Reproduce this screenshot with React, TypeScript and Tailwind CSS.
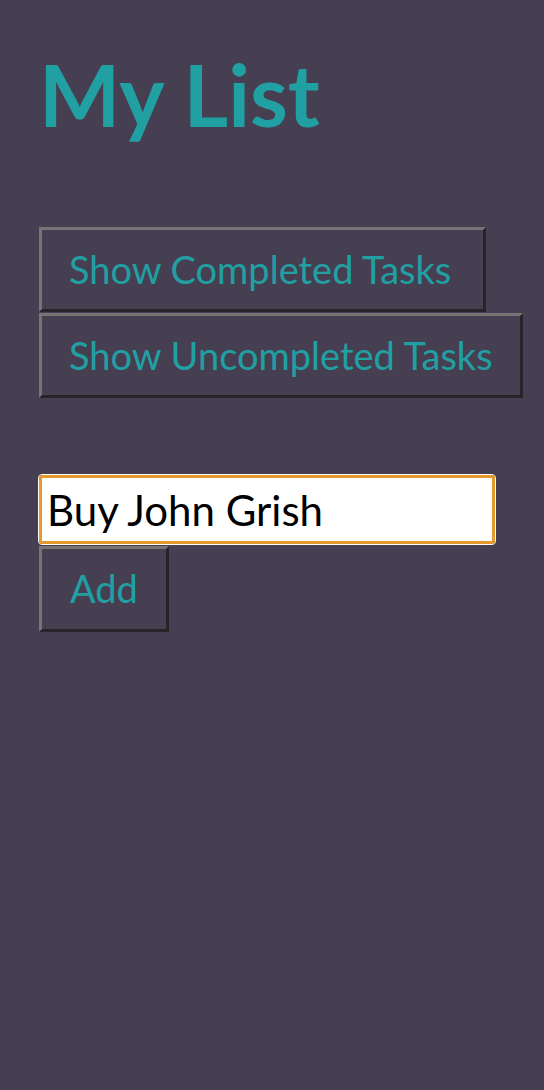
const btn =
  "border-[3px] border-t-[#757575] border-l-[#757575] border-b-[#262428] border-r-[#262428] bg-[#463f51] px-[27px] py-[14px] text-[38px] leading-[51px] text-[#21a0a4]";

export default function App() {
  return (
    <div className="min-h-[1090px] w-full bg-[#463f51] pl-[39px] pt-[44px] font-['Lato','Noto_Sans',sans-serif]">
      <h1 className="text-[86px] font-bold leading-[100px] text-[#21a0a4]">My List</h1>

      <div className="mt-[83px] flex flex-col items-start">
        <button className={btn + " pr-[32px]"}>Show Completed Tasks</button>
        <button className={btn + " mt-px"}>Show Uncompleted Tasks</button>
      </div>

      <div className="mt-[76px] flex flex-col items-start">
        <div className="-ml-px rounded-[4px] border border-white">
          <input
            defaultValue="Buy John Grish"
            spellCheck={false}
            className="block h-[69px] w-[456px] rounded-[3px] border-[3px] border-[#e69a2b] bg-white px-[5px] text-[42px] text-black outline-none"
          />
        </div>
        <button className={btn + " mt-px px-[28px] pb-[15px]"}>Add</button>
      </div>
    </div>
  );
}
